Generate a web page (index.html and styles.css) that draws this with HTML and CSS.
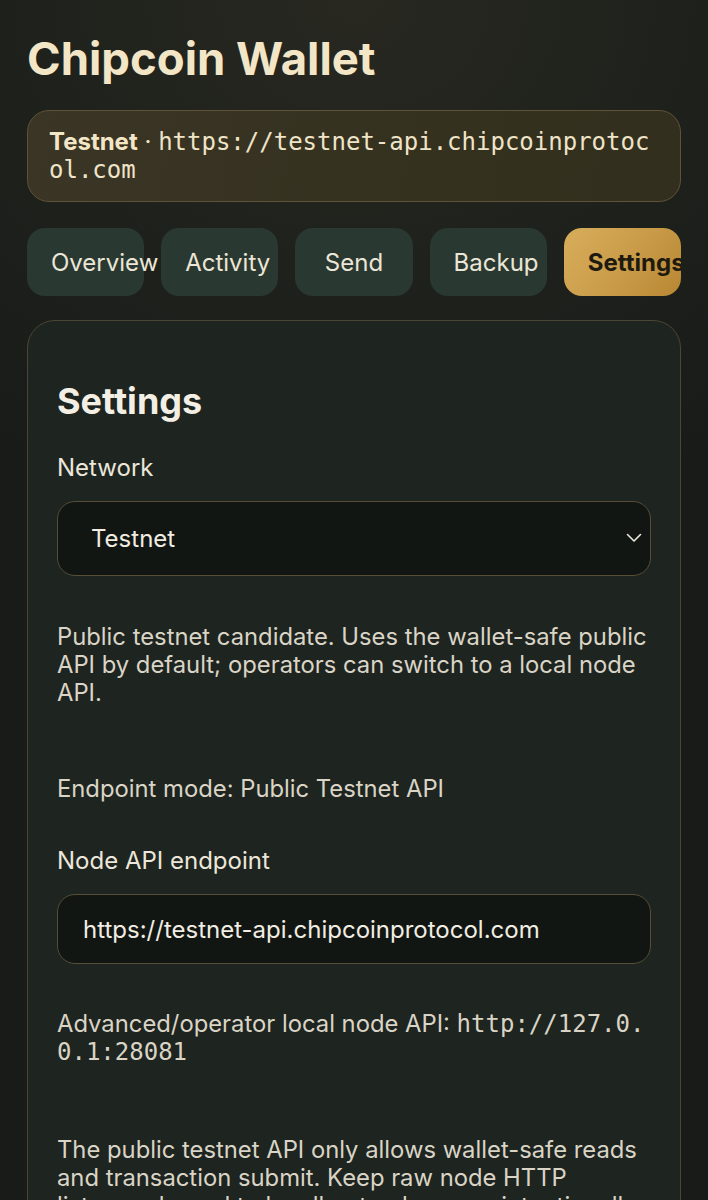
FILE: index.html
```html
<!DOCTYPE html>
<html lang="en">
<head>
<meta charset="utf-8">
<title>Chipcoin Wallet</title>
<link rel="stylesheet" href="styles.css">
</head>
<body>
<main class="app">
  <h1 class="title">Chipcoin Wallet</h1>
  <div class="network-badge"><strong>Testnet</strong> · <code>https://testnet-api.chipcoinprotocol.com</code></div>
  <nav class="tabs">
    <button class="tab">Overview</button>
    <button class="tab">Activity</button>
    <button class="tab">Send</button>
    <button class="tab">Backup</button>
    <button class="tab tab-active">Settings</button>
  </nav>
  <section class="card">
    <h2 class="card-title">Settings</h2>
    <label class="field-label" for="network">Network</label>
    <div class="select-wrap">
      <select id="network" class="control select">
        <option>Testnet</option>
        <option>Mainnet</option>
      </select>
      <svg class="chevron" width="16" height="10" viewBox="0 0 16 10" aria-hidden="true"><path d="M1.5 1.5 L8 8 L14.5 1.5" fill="none" stroke="#ece8dc" stroke-width="1.6" stroke-linecap="round" stroke-linejoin="round"/></svg>
    </div>
    <p class="hint hint-network">Public testnet candidate. Uses the wallet-safe public API by default; operators can switch to a local node API.</p>
    <p class="hint hint-mode">Endpoint mode: Public Testnet API</p>
    <label class="field-label label-node" for="endpoint">Node API endpoint</label>
    <input id="endpoint" class="control input" type="text" value="https://testnet-api.chipcoinprotocol.com">
    <p class="hint hint-local">Advanced/operator local node API: <code>http://127.0.0.1:28081</code></p>
    <p class="hint hint-public">The public testnet API only allows wallet-safe reads and transaction submit. Keep raw node HTTP listeners bound to localhost unless you intentionally expose them.</p>
  </section>
</main>
</body>
</html>
```

FILE: styles.css
```css
* { box-sizing: border-box; }

html, body {
  margin: 0;
  padding: 0;
}

body {
  background: radial-gradient(ellipse 90% 45% at 50% 0%, #282821 0%, #1d201b 60%, #181b17 100%);
  background-color: #1a1d18;
  height: 1200px;
  font-family: Inter, "Noto Sans", "Liberation Sans", sans-serif;
  color: #ece7da;
  overflow: hidden;
}

.app {
  padding: 27px 27px 0;
  display: flex;
  flex-direction: column;
}

.title {
  margin: 5px 0 0;
  font-size: 45.5px;
  line-height: 54px;
  font-weight: 700;
  letter-spacing: 0;
  color: #f3e6c7;
}

.network-badge {
  margin-top: 24px;
  padding: 17px 21px;
  border: 1.5px solid #5e5338;
  border-radius: 22px;
  background: linear-gradient(100deg, #3a3525 0%, #35311f 60%, #332f1e 100%);
  font-size: 24px;
  line-height: 28px;
  color: #efe4c8;
  word-break: break-all;
}

.network-badge strong {
  font-weight: 700;
  color: #f3e6c7;
}

code {
  font-family: "DejaVu Sans Mono", "Liberation Mono", monospace;
  font-size: 24px;
  line-height: inherit;
  word-break: break-all;
}

.tabs {
  margin-top: 26px;
  display: grid;
  grid-template-columns: repeat(5, 1fr);
  gap: 17px;
  overflow: hidden;
}

.tab {
  height: 68px;
  padding: 0 24px;
  border: 0;
  border-radius: 18px;
  background: #2a3832;
  color: #ece6d6;
  font-family: inherit;
  font-size: 24px;
  font-weight: 400;
  text-align: center;
  white-space: nowrap;
  overflow: visible;
  min-width: 0;
}

.tab-active {
  background: linear-gradient(125deg, #d7ad5b 0%, #c99b48 55%, #b88733 100%);
  color: #1e1a10;
  font-weight: 700;
}

.card {
  margin-top: 24px;
  padding: 29px 29px 60px;
  border: 1.5px solid #4b4733;
  border-radius: 28px;
  background: #1e2420;
  display: flex;
  flex-direction: column;
}

.card-title {
  margin: 30px 0 0;
  font-size: 36px;
  line-height: 42px;
  font-weight: 700;
  color: #f4efe4;
}

.field-label {
  display: block;
  margin-top: 32px;
  font-size: 24px;
  line-height: 28px;
  color: #ece7da;
}

.label-node {
  margin-top: 44px;
}

.select-wrap {
  position: relative;
  margin-top: 19px;
}

.control {
  display: block;
  width: 100%;
  border: 1.5px solid #564e36;
  border-radius: 18px;
  background: #121613;
  color: #f1ede2;
  font-family: inherit;
  font-size: 24px;
  outline: none;
}

.select {
  height: 75px;
  padding: 0 50px 0 33px;
  appearance: none;
  -webkit-appearance: none;
}

.chevron {
  position: absolute;
  right: 9px;
  top: 32px;
}

.input {
  margin-top: 19px;
  height: 70px;
  padding: 0 25px;
}

.hint {
  margin: 0;
  font-size: 23.8px;
  line-height: 28px;
  color: #d9d4c5;
}

.hint-network {
  margin-top: 47px;
}

.hint-mode {
  margin-top: 68px;
}

.hint-local {
  margin-top: 46px;
}

.hint-public {
  margin-top: 70px;
}
```
